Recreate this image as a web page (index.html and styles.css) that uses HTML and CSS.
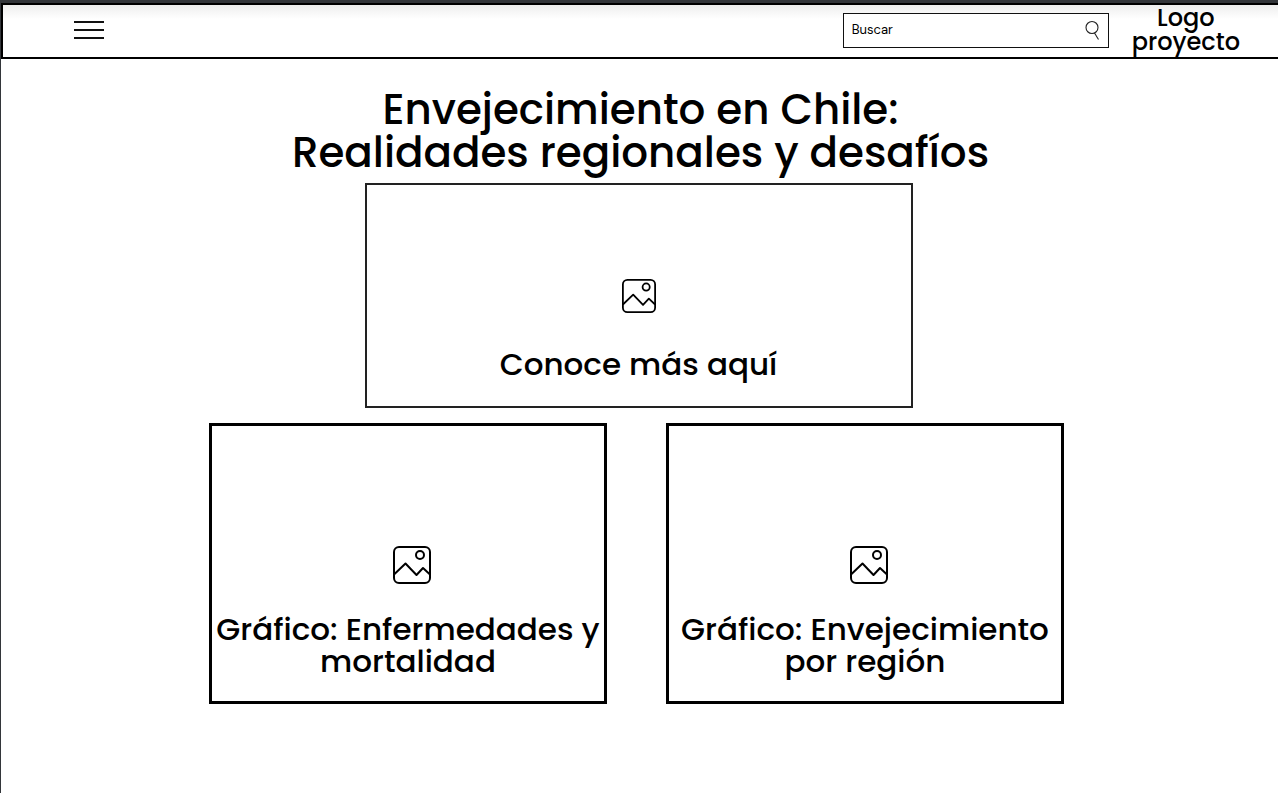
FILE: index.html
```html
<!DOCTYPE html>
<html lang="es">
<head>
<meta charset="utf-8">
<meta name="viewport" content="width=device-width, initial-scale=1">
<title>Envejecimiento en Chile</title>
<link rel="stylesheet" href="styles.css">
</head>
<body>
<svg class="sprite" aria-hidden="true">
  <symbol id="picture" viewBox="0 0 38 38">
    <g fill="none" stroke="#000" stroke-width="2" stroke-linejoin="round">
      <rect x="1" y="1" width="36" height="36" rx="5"/>
      <circle cx="27" cy="9" r="4"/>
      <path d="M1 28.500L12.500 17.500L23.500 29L30 22L37 28.500"/>
    </g>
  </symbol>
</svg>
<header class="topbar">
  <button class="menu" type="button" aria-label="Menú">
    <svg width="30" height="20" viewBox="0 0 30 20" aria-hidden="true"><path d="M0 2H30M0 10H30M0 18H30" stroke="#111" stroke-width="1.800"/></svg>
  </button>
  <form class="search" role="search">
    <input class="search-input" type="search" placeholder="Buscar" aria-label="Buscar">
    <button class="search-button" type="submit" aria-label="Enviar búsqueda">
      <svg width="16" height="20" viewBox="0 0 16 20" aria-hidden="true"><g fill="none" stroke="#222" stroke-width="1.100"><circle cx="8" cy="7.500" r="6"/><path d="M10.500 13L14.500 19.500"/></g></svg>
    </button>
  </form>
  <a class="logo" href="#">Logo<br>proyecto</a>
</header>
<main class="content">
  <h1 class="title">Envejecimiento en Chile:<br>Realidades regionales y desafíos</h1>
  <a class="hero" href="#">
    <svg class="hero-icon" aria-hidden="true"><use href="#picture"/></svg>
    <span class="label">Conoce más aquí</span>
  </a>
  <div class="cards">
    <a class="card" href="#">
      <svg class="card-icon" aria-hidden="true"><use href="#picture"/></svg>
      <span class="label">Gráfico: Enfermedades y<br>mortalidad</span>
    </a>
    <a class="card" href="#">
      <svg class="card-icon" aria-hidden="true"><use href="#picture"/></svg>
      <span class="label">Gráfico: Envejecimiento<br>por región</span>
    </a>
  </div>
</main>
</body>
</html>
```
FILE: styles.css
```css
* {
  box-sizing: border-box;
}

body {
  margin: 0;
  min-height: 100vh;
  border-top: 3px solid #33363a;
  border-left: 1px solid #33363a;
  background: #fff;
  color: #000;
  font-family: Poppins, Inter, sans-serif;
  font-weight: 500;
}

a {
  color: inherit;
  text-decoration: none;
}

button {
  display: flex;
  padding: 0;
  border: 0;
  background: none;
  cursor: pointer;
}

.sprite {
  position: absolute;
  width: 0;
  height: 0;
}

.topbar {
  display: flex;
  align-items: center;
  padding: 1px 38px 3px 71px;
  border: 2px solid #000;
  border-right: 0;
  background: linear-gradient(#eee, #fff 14px);
}

.menu {
  margin-right: auto;
}

.search {
  display: flex;
  align-items: center;
  width: 266px;
  height: 35px;
  margin-right: 23px;
  padding: 0 8px;
  border: 1px solid #111;
  background: #fff;
}

.search-input {
  flex: 1;
  min-width: 0;
  padding: 0;
  border: 0;
  outline: 0;
  background: none;
  color: #000;
  font: 400 13px/16px "DM Sans", Inter, sans-serif;
}

.search-input::placeholder {
  color: #000;
}

.logo {
  font-size: 24px;
  line-height: 24px;
  text-align: center;
}

.content {
  display: flex;
  flex-direction: column;
  align-items: center;
  padding: 29px 18px 32px 16px;
}

.title {
  margin: 0 0 9px;
  padding-left: 4px;
  font-size: 42px;
  font-weight: 500;
  line-height: 43px;
  text-align: center;
}

.hero,
.card {
  display: flex;
  flex-direction: column;
  align-items: center;
  width: 100%;
  text-align: center;
}

.hero {
  max-width: 548px;
  margin-bottom: 15px;
  padding: 94px 0 26px;
  border: 2px solid #222;
}

.hero-icon {
  width: 34px;
  height: 34px;
  margin-bottom: 35px;
}

.label {
  font-size: 31px;
  line-height: 32px;
}

.cards {
  display: grid;
  grid-template-columns: repeat(2, minmax(0, 1fr));
  gap: 59px;
  width: 100%;
  max-width: 859px;
  padding-right: 4px;
}

.card {
  padding: 120px 0 24px;
  border: 3px solid #000;
}

.card-icon {
  width: 38px;
  height: 38px;
  margin: 0 0 29px 8px;
}
```
